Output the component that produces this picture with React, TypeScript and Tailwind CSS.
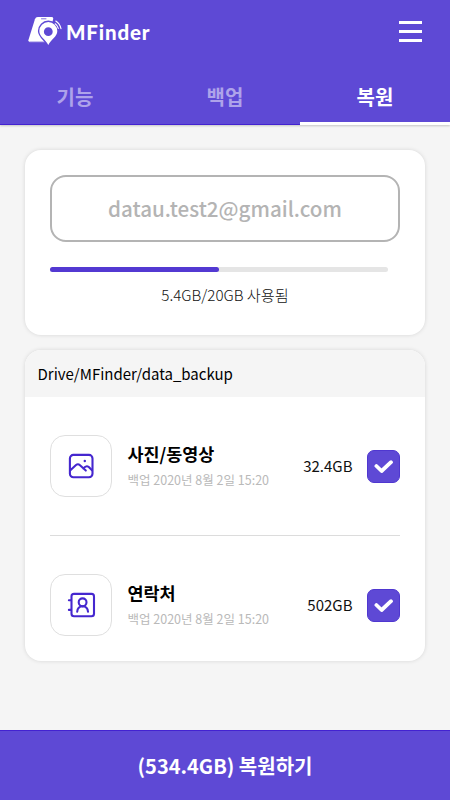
import type { ReactNode } from 'react';

function Logo() {
  return (
    <svg width="36" height="30" viewBox="0 0 36 30" className="shrink-0" fill="none">
      <path d="M9.8 1H23.4Q25.6 1 25.2 3L19 26H2.2Q-.2 26 .5 23.7L6.9 3.2Q7.6 1 9.8 1Z" fill="#fff" />
      <path d="M13.5 2.8H18" stroke="#5e49d5" strokeWidth=".8" strokeLinecap="round" />
      <path d="M1.6 25.6H18" stroke="#c9c2f0" strokeWidth="1.2" />
      <path d="M20.3 6A9 9 0 0 0 11.3 15C11.3 20.4 17.5 23.6 20.3 29C23.1 23.6 29.3 20.4 29.3 15A9 9 0 0 0 20.3 6Z" fill="#5e49d5" stroke="#5e49d5" strokeWidth="2.8" />
      <path fillRule="evenodd" d="M20.3 6A9 9 0 0 0 11.3 15C11.3 20.4 17.5 23.6 20.3 29C23.1 23.6 29.3 20.4 29.3 15A9 9 0 0 0 20.3 6ZM20.3 11.3A4.4 4.4 0 1 1 20.3 20.1A4.4 4.4 0 0 1 20.3 11.3Z" fill="#fff" />
      <path d="M27.2 7.8Q29.4 9.4 30.3 12.4" stroke="#fff" strokeWidth="1.1" strokeLinecap="round" />
      <path d="M27.8 5Q31.8 7.6 33 12.6" stroke="#fff" strokeWidth="1.1" strokeLinecap="round" />
    </svg>
  );
}

function PhotoIcon() {
  return (
    <svg width="28" height="28" viewBox="0 0 28 28" fill="none" stroke="#4527cf" strokeWidth="2.1" strokeLinecap="round" strokeLinejoin="round">
      <rect x="2.9" y="2.9" width="22.6" height="22.4" rx="3.5" />
      <path d="M3.4 18.2L9 13Q11 11.4 13 13.2L18.8 18.6M16.3 16.4Q19.2 13 21.8 15L25 18.2" />
      <circle cx="17.8" cy="9" r="1.2" fill="#4527cf" stroke="none" />
    </svg>
  );
}

function ContactIcon() {
  return (
    <svg width="30" height="28" viewBox="0 0 30 28" fill="none" stroke="#4527cf" strokeWidth="2.1" strokeLinecap="round" strokeLinejoin="round">
      <rect x="5.5" y="2.9" width="22.5" height="22.4" rx="2.5" />
      <path d="M2.9 9.2H5M2.9 18.9H5" />
      <circle cx="16.6" cy="11.3" r="3.9" />
      <path d="M11.2 20.7C11.4 17.9 13 15.3 16.6 15.2C20.2 15.3 21.8 17.9 22 20.7" />
    </svg>
  );
}

function Check() {
  return (
    <div className="flex size-[33px] items-center justify-center rounded-[7px] border border-[#4f37d0] bg-[#5e49d5]">
      <svg width="20" height="16" viewBox="0 0 20 16" fill="none" stroke="#fff" strokeWidth="3.8" strokeLinecap="round" strokeLinejoin="round">
        <path d="M2.4 8L7.6 13L17 4.2" />
      </svg>
    </div>
  );
}

function BackupRow({ icon, title, size }: { icon: ReactNode; title: string; size: string }) {
  return (
    <div className="flex h-[62px] items-center">
      <div className="flex size-[62px] items-center justify-center rounded-[15px] border border-[#dfdfdf]">{icon}</div>
      <div className="ml-[15.5px] flex flex-1 flex-col whitespace-nowrap">
        <span className="text-[17.4px] leading-[26px] font-bold text-black">{title}</span>
        <span className="text-[12.5px] leading-[25px] text-[#b9b9b9]">백업 2020년 8월 2일 15:20</span>
      </div>
      <span className="mr-[14.5px] text-[15px] text-[#111]">{size}</span>
      <Check />
    </div>
  );
}

export default function App() {
  return (
    <div className="flex h-[800px] w-[450px] flex-col overflow-hidden bg-[#f5f5f5] font-['Noto_Sans_CJK_KR',sans-serif]">
      <header className="flex h-[125px] shrink-0 flex-col bg-[#5e49d5] shadow-[0_1px_2px_rgba(0,0,0,0.2)]">
        <div className="flex h-[70px] shrink-0 items-start justify-between pt-4 pr-7 pl-[28px]">
          <div className="flex items-start">
            <Logo />
            <span className="ml-[2px] font-['Lato',sans-serif] text-[20.5px] leading-[32px] font-black tracking-[0.85px] text-white">MFinder</span>
          </div>
          <div className="mt-[5px] flex w-[23px] flex-col gap-[6px]">
            <span className="h-[3px] bg-white" />
            <span className="h-[3px] bg-white" />
            <span className="h-[3px] bg-white" />
          </div>
        </div>
        <nav className="grid h-[55px] grid-cols-3 text-center text-[20px] leading-[52px] font-bold text-[#aea3ea]">
          <span className="h-[55px] border-b border-[#4322d1] pt-px">기능</span>
          <span className="h-[55px] border-b border-[#4322d1] pt-px">백업</span>
          <span className="h-[55px] border-b-[3px] border-white pt-px text-white">복원</span>
        </nav>
      </header>

      <main className="flex flex-1 flex-col gap-[15px] px-[25px] pt-[25px]">
        <section className="flex h-[185px] flex-col items-center rounded-[16px] bg-white px-[25px] pt-[25px] shadow-[0_0_4px_rgba(0,0,0,0.13)]">
          <div className="flex h-[67px] w-full items-center justify-center rounded-[16px] border-2 border-[#b4b4b4] text-[20.6px] font-medium text-[#b4b4b4]">
            datau.test2@gmail.com
          </div>
          <div className="mt-[25px] mr-auto h-[5px] w-[338px] rounded-full bg-[#e5e5e5]">
            <div className="h-full w-1/2 rounded-full bg-[#5339d2]" />
          </div>
          <p className="mt-[10px] text-[15.2px] leading-[24px] font-light text-[#111]">5.4GB/20GB 사용됨</p>
        </section>

        <section className="flex h-[311px] flex-col overflow-hidden rounded-[16px] bg-white shadow-[0_0_4px_rgba(0,0,0,0.13)]">
          <h2 className="h-[47px] shrink-0 bg-[#f5f5f5] pl-[12.5px] text-[15px] leading-[48px] text-black">Drive/MFinder/data_backup</h2>
          <div className="flex flex-col px-[25px] pt-[38px]">
            <BackupRow icon={<PhotoIcon />} title="사진/동영상" size="32.4GB" />
            <hr className="mt-[38px] mb-[38px] border-[#dcdcdc]" />
            <BackupRow icon={<ContactIcon />} title="연락처" size="502GB" />
          </div>
        </section>
      </main>

      <button className="h-[70px] shrink-0 border-t border-[#4322d1] bg-[#5e49d5] text-[20px] font-bold text-white">
        (534.4GB) 복원하기
      </button>
    </div>
  );
}
